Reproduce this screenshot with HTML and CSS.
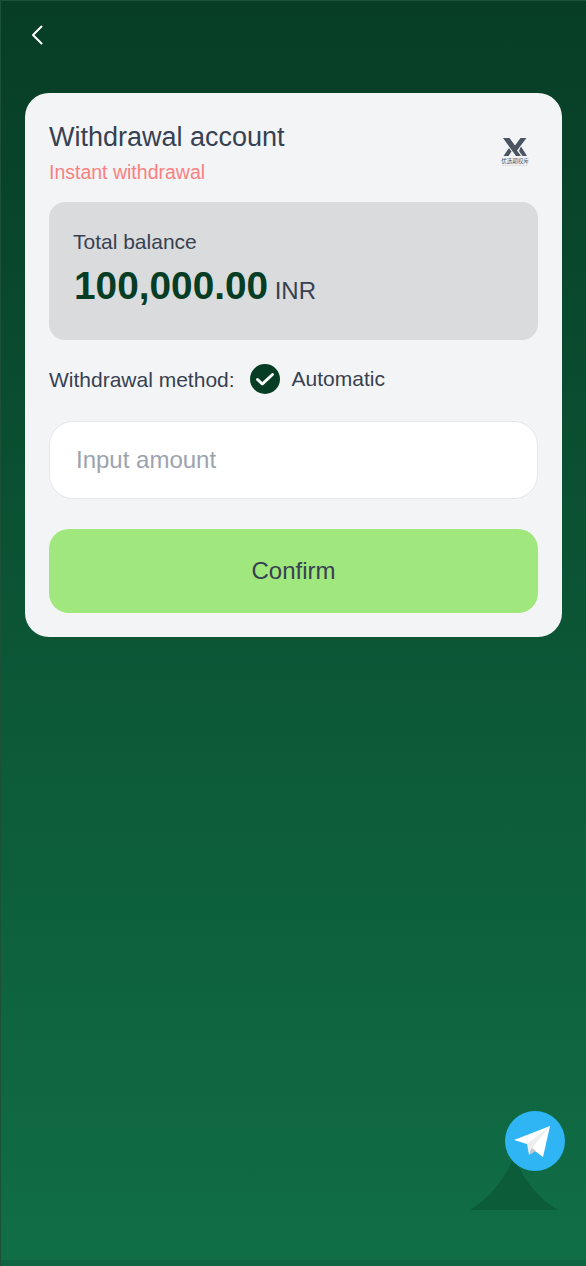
FILE: index.html
```html
<!DOCTYPE html>
<html lang="en">
<head>
  <meta charset="UTF-8" />
  <meta name="viewport" content="width=device-width, initial-scale=1.0"/>
  <title>Withdrawal</title>
  <link rel="stylesheet" href="styles.css">
</head>
<body>
  <div class="page">
    <header class="top-bar">
      <a class="back-btn" href="#" aria-label="Back">
        <svg width="12" height="20" viewBox="0 0 12 20"><path d="M10.500 1.500 2 10l8.500 8.500" fill="none" stroke="#fff" stroke-width="2" stroke-linecap="round" stroke-linejoin="round"/></svg>
      </a>
    </header>

    <main class="card">
      <div class="card-head">
        <div>
          <h1 class="card-title">Withdrawal account</h1>
          <p class="card-sub">Instant withdrawal</p>
        </div>
        <div class="logo">
          <svg width="26" height="20" viewBox="0 0 26 20">
            <path d="M1 1H7.500L13 8.500 18.500 1H24.500L15 13.500 19 19H14L1 1Z" fill="#4a5561"/>
            <path d="M7 11 1.500 19H6.500L9.500 14.500Z" fill="#4a5561"/>
            <path d="M19 9.500 25 19H20.500L17 14Z" fill="#4a5561"/>
          </svg>
          <span class="logo-name">优选期权库</span>
          <span class="logo-line"></span>
        </div>
      </div>

      <section class="balance">
        <div class="balance-label">Total balance</div>
        <div class="balance-row"><span class="balance-num">100,000.00</span> <span class="balance-cur">INR</span></div>
      </section>

      <div class="method">
        <span class="method-label">Withdrawal method:</span>
        <svg class="check" width="30" height="30" viewBox="0 0 30 30">
          <circle cx="15" cy="15" r="15" fill="#073d25"/>
          <path d="M7.500 15.500l4.800 4.500L22.500 10.500" fill="none" stroke="#fff" stroke-width="3" stroke-linecap="round" stroke-linejoin="round"/>
        </svg>
        <span>Automatic</span>
      </div>

      <input class="amount" type="text" placeholder="Input amount" />
      <button class="confirm">Confirm</button>
    </main>

    <div class="float-wrap">
      <svg class="mountain" width="88" height="56" viewBox="0 0 88 56"><path d="M44 0C50 20 68 44 88 55H0C20 44 38 20 44 0z" fill="#0c5b39"/></svg>
      <a class="tg-btn" href="#" aria-label="Telegram">
        <svg width="60" height="60" viewBox="0 0 60 60">
          <circle cx="30" cy="30" r="30" fill="#2fb5f3"/>
          <path d="M9 29 45 15 38 46 26 37 22 33z" fill="#fff"/>
          <path d="M22 33 45 15 27 37 24 44z" fill="#eceef0"/>
          <path d="M24 44 27 37l4 3z" fill="#c6c8cc"/>
        </svg>
      </a>
    </div>
  </div>
</body>
</html>
```

FILE: styles.css
```css
* {
  box-sizing: border-box;
}
body {
  margin: 0;
  font-family: "Liberation Sans", Arial, sans-serif;
  background: #1d5038;
}
.page {
  position: relative;
  height: 1266px;
  margin-left: 1px;
  border-top: 1px solid #1d5038;
  border-bottom: 6px solid #0e6340;
  background: linear-gradient(#073d25, #106e46);
  padding: 0 24px;
}
.top-bar {
  height: 92px;
  padding-top: 24px;
}
.back-btn {
  display: inline-block;
  margin-left: 6px;
}
.card {
  background: #f3f4f6;
  border-radius: 24px;
  padding: 24px;
  height: 544px;
  width: 537px;
  color: #374151;
}
.card-head {
  display: flex;
  justify-content: space-between;
  align-items: flex-start;
  height: 85px;
}
.card-title {
  margin: 1px 0 0;
  font-size: 27px;
  font-weight: 400;
  line-height: 38px;
}
.card-sub {
  margin: 2px 0 0;
  font-size: 19.500px;
  line-height: 28px;
  color: #f98080;
}
.logo {
  display: flex;
  flex-direction: column;
  align-items: center;
  width: 28px;
  margin: 20px 9px 0 0;
}
.logo-name {
  font: 5.500px/6px "Noto Sans CJK SC", sans-serif;
  color: #4b5563;
  white-space: nowrap;
  margin-top: 1px;
}
.logo-line {
  width: 26px;
  height: 1px;
  background: #dfe1e4;
  margin-top: 1px;
}
.balance {
  height: 138px;
  background: #dadbdd;
  border-radius: 16px;
  padding: 27px 24px;
}
.balance-label {
  font-size: 21px;
  line-height: 26px;
}
.balance-row {
  margin-top: 8px;
  margin-left: 1px;
  line-height: 46px;
}
.balance-num {
  font-size: 38.800px;
  font-weight: 700;
  color: #073d25;
}
.balance-cur {
  font-size: 24px;
  margin-left: 2px;
}
.method {
  display: flex;
  align-items: center;
  margin-top: 24px;
  font-size: 21px;
  height: 30px;
}
.method-label {
  margin-top: 2px;
}
.check {
  margin: 0 12px 0 15px;
}
.amount {
  display: block;
  width: 100%;
  height: 78px;
  margin-top: 27px;
  padding: 0 26px;
  border: 1px solid #e5e7eb;
  border-radius: 24px;
  background: #fff;
  font: 24px "Liberation Sans", Arial, sans-serif;
}
.amount::placeholder {
  color: #9ca3af;
}
.confirm {
  display: block;
  width: 100%;
  height: 84px;
  margin-top: 30px;
  border: none;
  border-radius: 20px;
  background: #a0e77d;
  color: #374151;
  font: 24px "Liberation Sans", Arial, sans-serif;
}
.float-wrap {
  position: absolute;
  left: 469px;
  top: 1110px;
  width: 96px;
  height: 100px;
}
.mountain {
  position: absolute;
  left: 0;
  bottom: 0;
}
.tg-btn {
  position: absolute;
  left: 35px;
  top: 0;
}
```
